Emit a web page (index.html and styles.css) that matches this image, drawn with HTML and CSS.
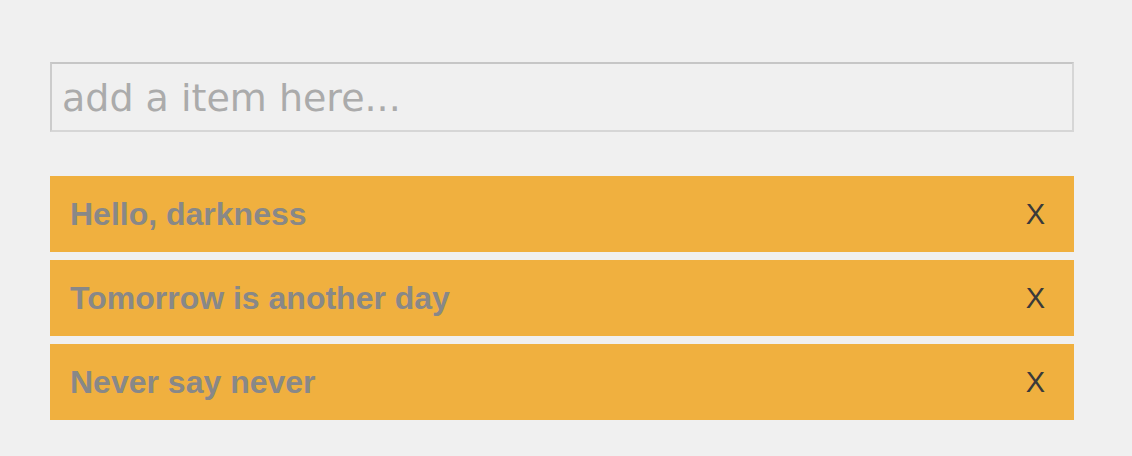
FILE: index.html
```html
<!DOCTYPE html>
<html>
<head>
<meta charset="utf-8">
<link rel="stylesheet" href="styles.css">
</head>
<body>
<div class="app">
  <input class="new-item" type="text" placeholder="add a item here...">
  <ul class="list">
    <li class="item"><span class="label">Hello, darkness</span><span class="remove">X</span></li>
    <li class="item"><span class="label">Tomorrow is another day</span><span class="remove">X</span></li>
    <li class="item"><span class="label">Never say never</span><span class="remove">X</span></li>
  </ul>
</div>
</body>
</html>
```

FILE: styles.css
```css
html, body {
  margin: 0;
  padding: 0;
  background: #f0f0f0;
}
.app {
  width: 1024px;
  padding: 62px 0 0 50px;
  display: flex;
  flex-direction: column;
  gap: 44px;
}
.new-item {
  box-sizing: border-box;
  width: 1024px;
  height: 70px;
  margin: 0;
  padding: 2px 10px 0 10px;
  border: 2px solid #d6d6d6;
  border-top-color: #c6c6c6;
  border-left-color: #cccccc;
  background: #f0f0f0;
  font-family: "DejaVu Sans", sans-serif;
  font-size: 38px;
  color: #555;
  outline: none;
}
.new-item::placeholder {
  color: #ababab;
}
.list {
  list-style: none;
  margin: 0;
  padding: 0;
  display: flex;
  flex-direction: column;
  gap: 8px;
}
.item {
  height: 76px;
  background: #f0b03f;
  display: flex;
  align-items: center;
  justify-content: space-between;
  padding: 0 29px 0 20px;
  box-sizing: border-box;
}
.label {
  font-family: "Liberation Sans", Arial, sans-serif;
  font-weight: bold;
  font-size: 32px;
  color: #888888;
}
.remove {
  font-family: "Liberation Sans", Arial, sans-serif;
  font-size: 29px;
  color: #3a3a3a;
}
```
